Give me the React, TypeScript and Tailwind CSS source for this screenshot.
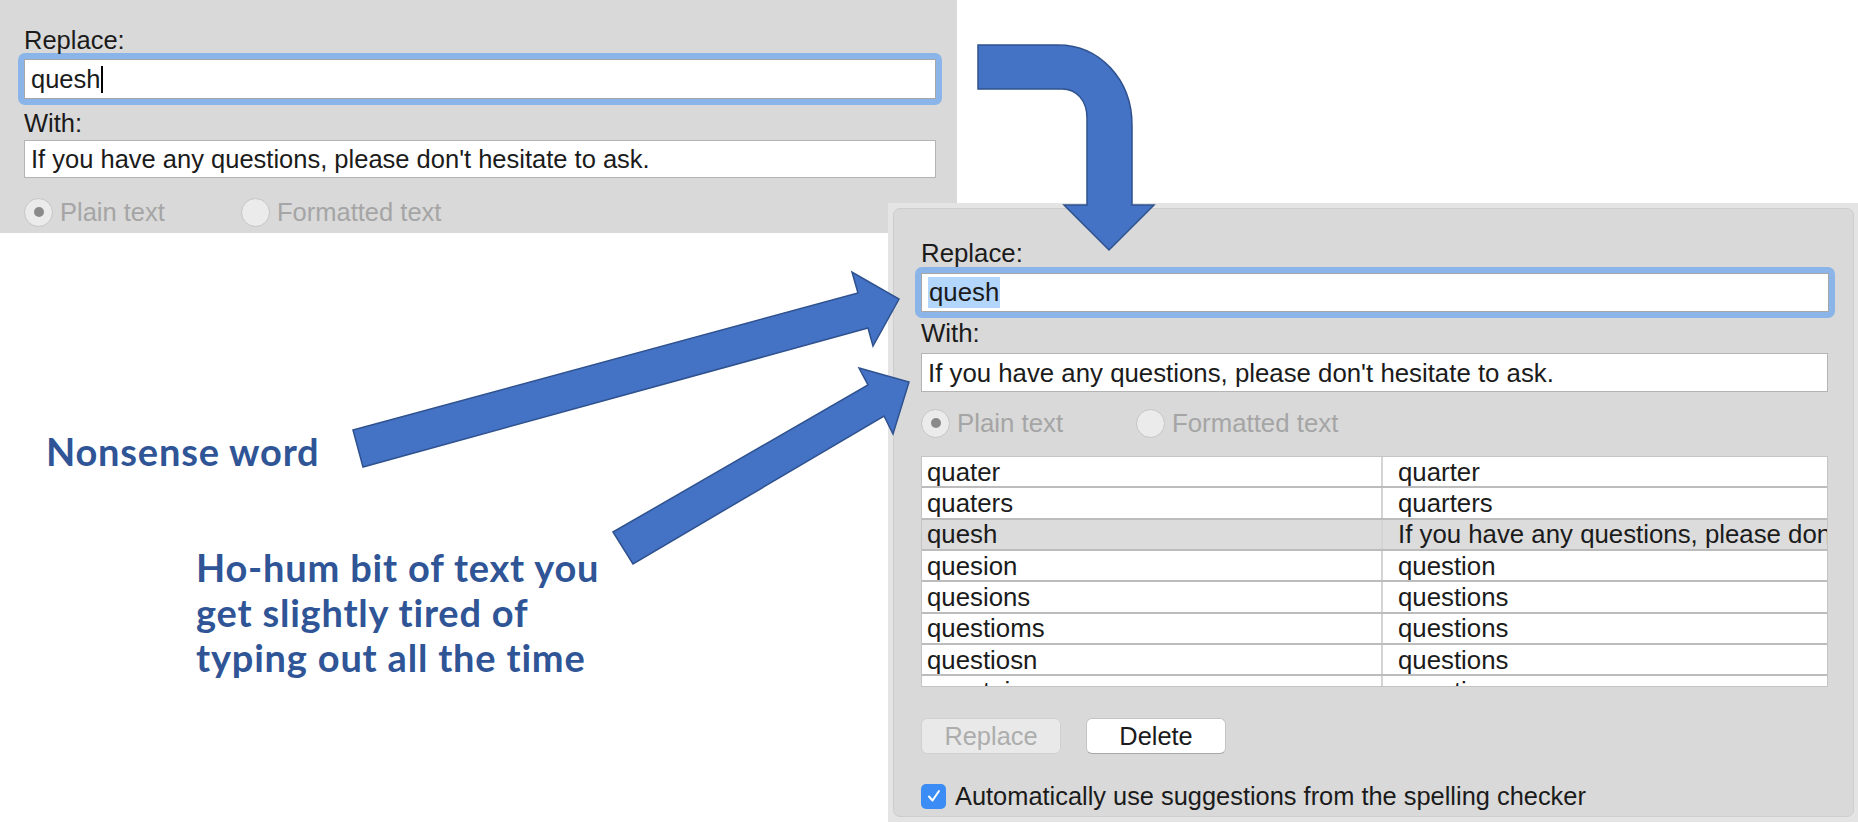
import React from 'react';

const rows = [
  { from: 'quater', to: 'quarter' },
  { from: 'quaters', to: 'quarters' },
  { from: 'quesh', to: "If you have any questions, please don't hesitate to ask.", selected: true },
  { from: 'quesion', to: 'question' },
  { from: 'quesions', to: 'questions' },
  { from: 'questioms', to: 'questions' },
  { from: 'questiosn', to: 'questions' },
  { from: 'questoin', to: 'question' },
];

function Radio({ checked, label, className }: { checked?: boolean; label: string; className?: string }) {
  return (
    <div className={`flex items-center gap-[7px] ${className ?? ''}`}>
      <span className="flex h-[29px] w-[29px] items-center justify-center rounded-full border border-[#c5c5c5] bg-[#ebebeb]">
        {checked && <span className="h-[10px] w-[10px] rounded-full bg-[#8a8a8a]" />}
      </span>
      <span className="leading-[26px] text-[#a5a5a5]">{label}</span>
    </div>
  );
}

function Arrows() {
  return (
    <svg
      className="pointer-events-none absolute left-0 top-0"
      width="1858"
      height="822"
      viewBox="0 0 1858 822"
    >
      <g fill="#4472c4" stroke="#2f528f" strokeWidth="1.5" strokeLinejoin="miter">
        {/* curved arrow, old dialog -> new dialog */}
        <path d="M978 45 L1058 45 C1100 45 1132 80 1132 125 L1132 205 L1154 205 L1109 250 L1064 205 L1087 205 L1087 118 C1087 101 1077 89 1062 89 L978 89 Z" />
        {/* nonsense word arrow */}
        <path d="M353 430 L858 293 L852 272 L899 299 L873 346 L868 328 L363 467 Z" />
        {/* ho-hum arrow */}
        <path d="M613 532 L868 385 L859 368 L909 382 L893 434 L884 416 L633 564 Z" />
      </g>
    </svg>
  );
}

export default function App() {
  return (
    <div className="relative h-[822px] w-[1858px] overflow-hidden bg-white font-['Liberation_Sans',Arial,sans-serif] text-[#1b1b1b]">
      {/* old dialog, top left */}
      <div className="h-[233px] w-[957px] bg-[#d9d9d9] pl-[24px] pt-[27px] text-[25.5px]">
        <div className="leading-[26px]">Replace:</div>
        <div className="-ml-[6px] w-[924px] rounded-[7px] bg-[#8bb5e8] p-[6px]">
          <div className="flex h-[40px] items-center border border-[#a7a7a7] bg-white pl-[6px] leading-[26px]">
            quesh
            <span className="ml-[1px] h-[27px] w-[2px] bg-black" />
          </div>
        </div>
        <div className="mt-[5px] leading-[26px]">With:</div>
        <div className="mt-[4px] flex h-[38px] w-[912px] items-center border border-[#b4b4b4] bg-white pl-[6px] leading-[26px]">
          If you have any questions, please don't hesitate to ask.
        </div>
        <div className="mt-[19px] flex h-[30px] items-center">
          <Radio checked label="Plain text" className="w-[217px]" />
          <Radio label="Formatted text" />
        </div>
      </div>

      {/* new dialog, bottom right */}
      <div className="absolute left-[888px] top-[203px] h-[619px] w-[970px] bg-[#e4e4e4] pb-[5px] pl-[5px] pr-[4px] pt-[5px] text-[25.8px]">
        <div className="h-full rounded-[7px] border border-[#cdcdcd] bg-[#d9d9d9] pl-[27px] pt-[31px]">
          <div className="leading-[26px]">Replace:</div>
          <div className="mt-[1px] -ml-[6px] w-[920px] rounded-[7px] bg-[#8bb5e8] p-[6px]">
            <div className="flex h-[39px] items-center border border-[#a7a7a7] bg-white pl-[6px]">
              <span className="bg-[#b3d6fd] px-[1px] leading-[31px]">quesh</span>
            </div>
          </div>
          <div className="mt-[2px] leading-[26px]">With:</div>
          <div className="mt-[7px] flex h-[39px] w-[907px] items-center border border-[#b4b4b4] bg-white pl-[6px] leading-[26px]">
            If you have any questions, please don't hesitate to ask.
          </div>
          <div className="mt-[16px] flex h-[30px] items-center">
            <Radio checked label="Plain text" className="w-[215px]" />
            <Radio label="Formatted text" />
          </div>

          <div className="mt-[18px] h-[231px] w-[907px] overflow-hidden border border-[#c4c4c4] bg-white">
            {rows.map((r) => (
              <div
                key={r.from}
                className={`grid h-[31.33px] grid-cols-[461px_1fr] border-b-2 border-[#bcbcbc] leading-[26px] ${
                  r.selected ? 'bg-[#dcdcdc]' : 'bg-white'
                }`}
              >
                <div className="flex items-center border-r-2 border-[#d4d4d4] pl-[5px]">{r.from}</div>
                <div className="flex items-center overflow-hidden whitespace-nowrap pl-[15px]">{r.to}</div>
              </div>
            ))}
          </div>

          <div className="mt-[31px] flex gap-[25px] text-[25.4px]">
            <div className="flex h-[36px] w-[140px] items-center justify-center rounded-[6px] border border-[#d0d0d0] bg-[#e9e9e9] text-[#adadad]">
              Replace
            </div>
            <div className="flex h-[36px] w-[140px] items-center justify-center rounded-[6px] border border-[#c4c4c4] border-b-[#a9a9a9] bg-white">
              Delete
            </div>
          </div>

          <div className="mt-[29px] flex items-center gap-[9px]">
            <span className="flex h-[25px] w-[25px] items-center justify-center rounded-[5px] bg-[#3b8cf5]">
              <svg width="16" height="16" viewBox="0 0 16 16">
                <path d="M3 8.5 L6.5 12.5 L13 3" fill="none" stroke="white" strokeWidth="2" strokeLinecap="round" strokeLinejoin="round" />
              </svg>
            </span>
            <span className="text-[25.4px] leading-[26px]">Automatically use suggestions from the spelling checker</span>
          </div>
        </div>
      </div>

      {/* annotations */}
      <div className="absolute left-[46px] top-[429px] font-['Lato',sans-serif] text-[38px] font-bold leading-[45px] tracking-[0.8px] text-[#2f5597]">
        Nonsense word
      </div>
      <div className="absolute left-[196px] top-[545px] font-['Lato',sans-serif] text-[38px] font-bold leading-[45px] tracking-[0.8px] text-[#2f5597]">
        <div>Ho-hum bit of text you</div>
        <div>get slightly tired of</div>
        <div>typing out all the time</div>
      </div>

      <Arrows />
    </div>
  );
}
